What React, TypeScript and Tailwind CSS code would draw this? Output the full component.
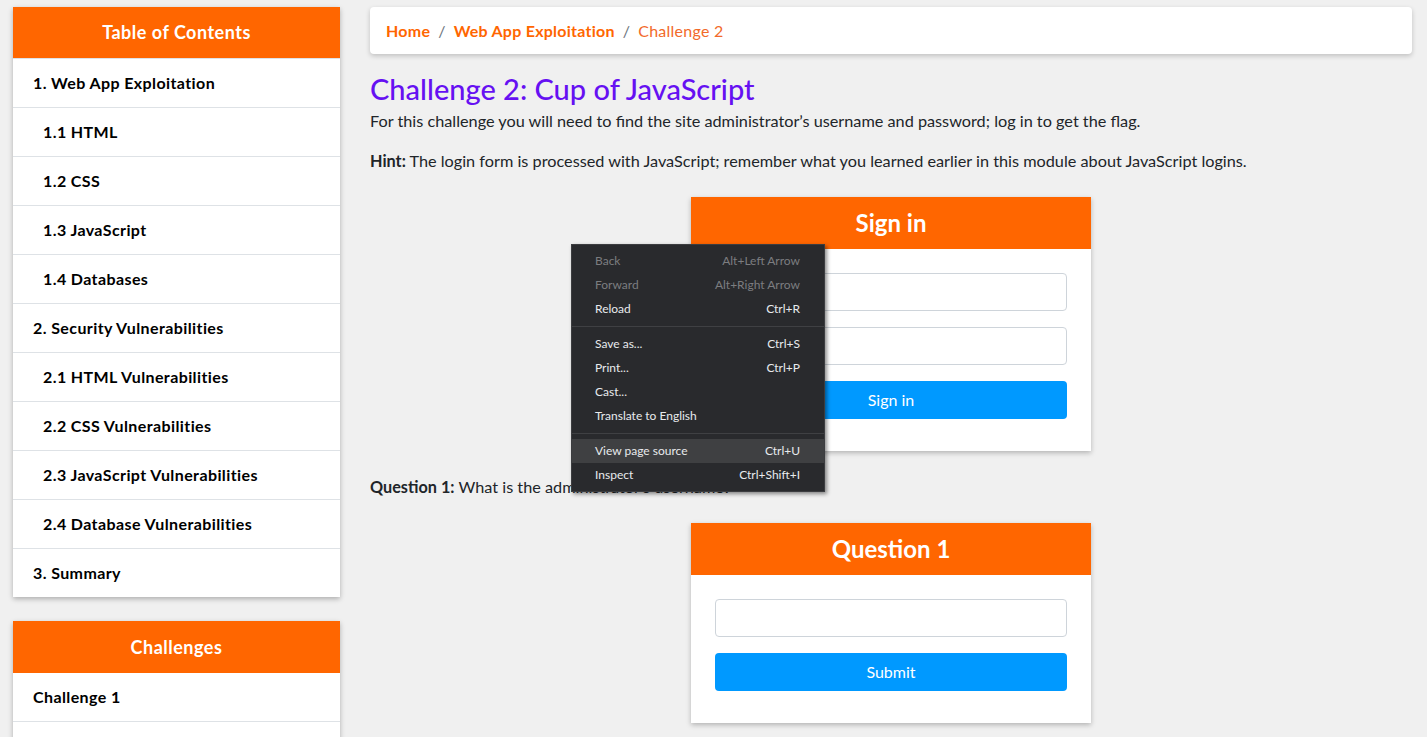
import type { ReactNode } from "react";

const font = { fontFamily: "Lato, 'Noto Sans', sans-serif" };

type TocItem = { label: string; sub?: boolean };

const toc: TocItem[] = [
  { label: "1. Web App Exploitation" },
  { label: "1.1 HTML", sub: true },
  { label: "1.2 CSS", sub: true },
  { label: "1.3 JavaScript", sub: true },
  { label: "1.4 Databases", sub: true },
  { label: "2. Security Vulnerabilities" },
  { label: "2.1 HTML Vulnerabilities", sub: true },
  { label: "2.2 CSS Vulnerabilities", sub: true },
  { label: "2.3 JavaScript Vulnerabilities", sub: true },
  { label: "2.4 Database Vulnerabilities", sub: true },
  { label: "3. Summary" },
];

type MenuEntry =
  | { sep: true }
  | { sep?: false; label: string; key?: string; disabled?: boolean; active?: boolean };

const menu: MenuEntry[] = [
  { label: "Back", key: "Alt+Left Arrow", disabled: true },
  { label: "Forward", key: "Alt+Right Arrow", disabled: true },
  { label: "Reload", key: "Ctrl+R" },
  { sep: true },
  { label: "Save as...", key: "Ctrl+S" },
  { label: "Print...", key: "Ctrl+P" },
  { label: "Cast..." },
  { label: "Translate to English" },
  { sep: true },
  { label: "View page source", key: "Ctrl+U", active: true },
  { label: "Inspect", key: "Ctrl+Shift+I" },
];

function SideCard({ title, tall, children }: { title: string; tall?: boolean; children: ReactNode }) {
  return (
    <div className="bg-white shadow-[0_2px_5px_rgba(0,0,0,0.28)]">
      <div
        className={`${tall ? "h-[52px]" : "h-[51px]"} bg-[#ff6600] flex items-center justify-center text-white font-bold text-[18px] tracking-[0.5px]`}
      >
        {title}
      </div>
      {children}
    </div>
  );
}

function FormCard({ title, children }: { title: string; children: ReactNode }) {
  return (
    <div className="w-[400px] mx-auto bg-white shadow-[0_2px_5px_rgba(0,0,0,0.25)]">
      <div className="h-[52px] bg-[#ff6600] flex items-center justify-center text-white font-bold text-[24px]">
        {title}
      </div>
      <div className="px-6 pt-6 pb-8 flex flex-col gap-4">{children}</div>
    </div>
  );
}

function Input() {
  return <div className="h-[38px] rounded border border-[#ced4da] bg-white" />;
}

function Button({ label }: { label: string }) {
  return (
    <div className="h-[38px] rounded bg-[#0099ff] text-white text-base flex items-center justify-center">
      {label}
    </div>
  );
}

function ContextMenu() {
  return (
    <div className="absolute left-[571px] top-[244px] w-[254px] py-1 bg-[#292a2d] border border-[#3c3d40] shadow-[2px_2px_4px_rgba(0,0,0,0.45)] text-[12px]">
      {menu.map((m, i) =>
        m.sep ? (
          <div key={i} className="h-[11px] flex items-center">
            <div className="h-px w-full bg-[#3f4043]" />
          </div>
        ) : (
          <div
            key={i}
            className={`h-6 pl-[23px] pr-6 flex items-center justify-between ${m.active ? "bg-[#3f4042]" : ""} ${
              m.disabled ? "text-[#7c7d80]" : "text-[#e8eaed]"
            }`}
          >
            <span>{m.label}</span>
            {m.key && <span>{m.key}</span>}
          </div>
        ),
      )}
    </div>
  );
}

export default function App() {
  return (
    <div className="relative min-h-[737px] bg-[#f0f0f0] text-[#212529]" style={font}>
      <div className="flex gap-[30px] pl-[13px] pr-[15px] pt-[7px]">
        <aside className="w-[327px] shrink-0 flex flex-col gap-6">
          <SideCard title="Table of Contents">
            {toc.map((t) => (
              <div
                key={t.label}
                className={`h-[49px] border-t border-[#dee2e6] first:border-t-0 flex items-center font-bold text-[16px] tracking-[0.4px] text-black ${
                  t.sub ? "pl-[30px]" : "pl-5"
                }`}
              >
                {t.label}
              </div>
            ))}
          </SideCard>
          <SideCard title="Challenges" tall>
            <div className="h-[49px] flex items-center pl-5 font-bold text-[16px] tracking-[0.4px] text-black border-b border-[#dee2e6]">
              Challenge 1
            </div>
            <div className="h-[49px]" />
          </SideCard>
        </aside>

        <main className="flex-1 min-w-0">
          <nav className="h-[47px] bg-white rounded shadow-[0_2px_5px_rgba(0,0,0,0.2)] flex items-center px-4 text-base tracking-[0.25px]">
            <span className="font-bold text-[#ff6600]">Home</span>
            <span className="px-2 text-[#6c757d]">/</span>
            <span className="font-bold text-[#ff6600]">Web App Exploitation</span>
            <span className="px-2 text-[#6c757d]">/</span>
            <span className="text-[#f26a2a]">Challenge 2</span>
          </nav>

          <h1 className="mt-[18px] text-[29px] leading-[34px] font-medium text-[#6610f2]">
            Challenge 2: Cup of JavaScript
          </h1>
          <p className="mt-[3px] leading-6 text-[16.25px]">
            For this challenge you will need to find the site administrator’s username and password; log in to get
            the flag.
          </p>
          <p className="mt-4 leading-6 text-[16.25px]">
            <b>Hint:</b> The login form is processed with JavaScript; remember what you learned earlier in this module
            about JavaScript logins.
          </p>

          <div className="mt-6">
            <FormCard title="Sign in">
              <Input />
              <Input />
              <Button label="Sign in" />
            </FormCard>
          </div>

          <p className="mt-6 leading-6 text-[16.25px]">
            <b>Question 1:</b> What is the administrator’s username?
          </p>

          <div className="mt-6 pb-8">
            <FormCard title="Question 1">
              <Input />
              <Button label="Submit" />
            </FormCard>
          </div>
        </main>
      </div>

      <ContextMenu />
    </div>
  );
}
